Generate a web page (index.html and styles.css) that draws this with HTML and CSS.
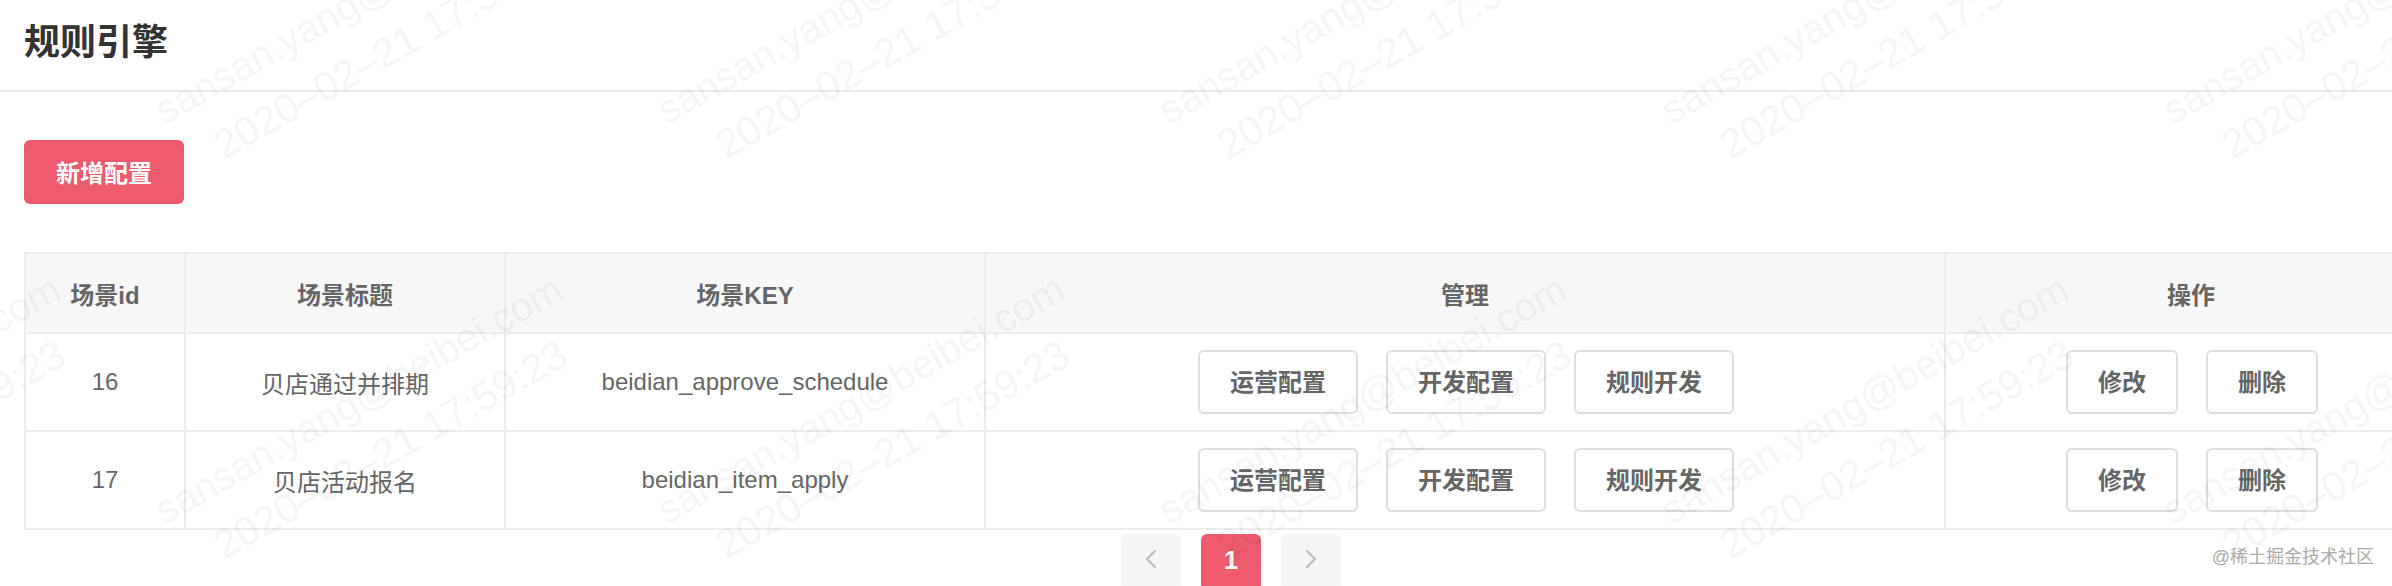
FILE: index.html
```html
<!DOCTYPE html>
<html lang="zh-CN">
<head>
<meta charset="utf-8">
<title>规则引擎</title>
<link rel="stylesheet" href="styles.css">
</head>
<body>
<header class="page-header"><h1 class="page-title">规则引擎</h1></header>
<main class="page-body">
  <button class="btn-primary">新增配置</button>
  <table class="rules">
    <colgroup>
      <col class="c-id"><col class="c-title"><col class="c-key"><col class="c-manage"><col class="c-ops">
    </colgroup>
    <thead>
      <tr><th>场景id</th><th>场景标题</th><th>场景KEY</th><th>管理</th><th>操作</th></tr>
    </thead>
    <tbody>
      <tr>
        <td>16</td><td>贝店通过并排期</td><td>beidian_approve_schedule</td>
        <td><div class="actions"><button class="btn">运营配置</button><button class="btn">开发配置</button><button class="btn">规则开发</button></div></td>
        <td><div class="actions"><button class="btn">修改</button><button class="btn">删除</button></div></td>
      </tr>
      <tr>
        <td>17</td><td>贝店活动报名</td><td>beidian_item_apply</td>
        <td><div class="actions"><button class="btn">运营配置</button><button class="btn">开发配置</button><button class="btn">规则开发</button></div></td>
        <td><div class="actions"><button class="btn">修改</button><button class="btn">删除</button></div></td>
      </tr>
    </tbody>
  </table>
  <nav class="pager">
    <span class="page page-off"><svg class="chev" viewBox="0 0 12 20"><path d="M10.5 1.5 2 10l8.5 8.5"/></svg></span>
    <span class="page page-on">1</span>
    <span class="page page-off"><svg class="chev" viewBox="0 0 12 20"><path d="M1.5 1.5 10 10l-8.5 8.5"/></svg></span>
  </nav>
</main>
<svg class="watermark" width="2392" height="586">
  <defs>
    <pattern id="wm" x="100" y="200" width="502" height="400" patternUnits="userSpaceOnUse">
      <text class="wm-text" transform="translate(65 325) rotate(-29.6)">sansan.yang@beibei.com</text>
      <text class="wm-text wm-date" transform="translate(124 360) rotate(-29.6)">2020–02–21 17:59:23</text>
    </pattern>
  </defs>
  <rect width="2392" height="586" fill="url(#wm)"/>
</svg>
<div class="credit">@稀土掘金技术社区</div>
</body>
</html>
```
FILE: styles.css
```css
* { box-sizing: border-box; }
html, body { margin: 0; padding: 0; }
body {
  width: 2392px;
  height: 586px;
  overflow: hidden;
  position: relative;
  background: #fff;
  color: #666;
  font-family: "Liberation Sans", "Noto Sans CJK SC", sans-serif;
  font-size: 24px;
}
.page-header {
  height: 92px;
  padding-left: 24px;
  border-bottom: 2px solid #e9e9e9;
  display: flex;
  align-items: center;
}
.page-title {
  margin: 0 0 4px;
  font-size: 36px;
  line-height: 50px;
  font-weight: 700;
  color: #333;
}
.page-body { padding: 48px 24px 0; width: 2462px; }
.btn-primary {
  display: block;
  width: 160px;
  height: 64px;
  padding: 0 0 2px;
  border: 0;
  border-radius: 6px;
  background: #ee5a6e;
  color: #fff;
  font: 700 24px "Liberation Sans", "Noto Sans CJK SC", sans-serif;
}
.rules {
  margin-top: 48px;
  width: 2414px;
  table-layout: fixed;
  border-collapse: separate;
  border-spacing: 0;
  border-top: 2px solid #ececec;
  border-left: 2px solid #ececec;
}
.c-id { width: 160px; }
.c-title { width: 320px; }
.c-key { width: 480px; }
.c-manage { width: 960px; }
.c-ops { width: 492px; }
.rules th, .rules td {
  padding: 0;
  text-align: center;
  border-right: 2px solid #ececec;
  border-bottom: 2px solid #ececec;
}
.rules th {
  height: 80px;
  background: #f7f7f7;
  font-weight: 700;
  color: #666;
}
.rules td { height: 98px; }
.actions { display: flex; justify-content: center; gap: 28px; padding-left: 2px; }
.btn {
  height: 64px;
  padding: 0 30px 4px;
  border: 2px solid #dedede;
  border-radius: 6px;
  background: #fff;
  color: #666;
  font: 700 24px "Liberation Sans", "Noto Sans CJK SC", sans-serif;
}
.pager {
  width: 2414px;
  margin-top: 4px;
  display: flex;
  justify-content: center;
  gap: 20px;
}
.page {
  width: 60px;
  height: 56px;
  border-radius: 6px;
  display: flex;
  align-items: center;
  justify-content: center;
}
.page-off { background: #f5f5f5; }
.page-on { background: #ee5a6e; color: #fff; font-weight: 700; font-size: 26px; padding-bottom: 4px; }
.chev { width: 12px; height: 20px; margin-top: -6px; fill: none; stroke: #bbb; stroke-width: 2; }
.watermark { position: absolute; left: 0; top: 0; pointer-events: none; }
.wm-text { font: 40px "Liberation Sans", sans-serif; fill: rgba(0,0,0,0.04); }
.wm-date { font-size: 41px; }
.credit {
  position: absolute;
  right: 18px;
  bottom: 20px;
  font-size: 18px;
  line-height: 18px;
  color: #aaa;
}
```
